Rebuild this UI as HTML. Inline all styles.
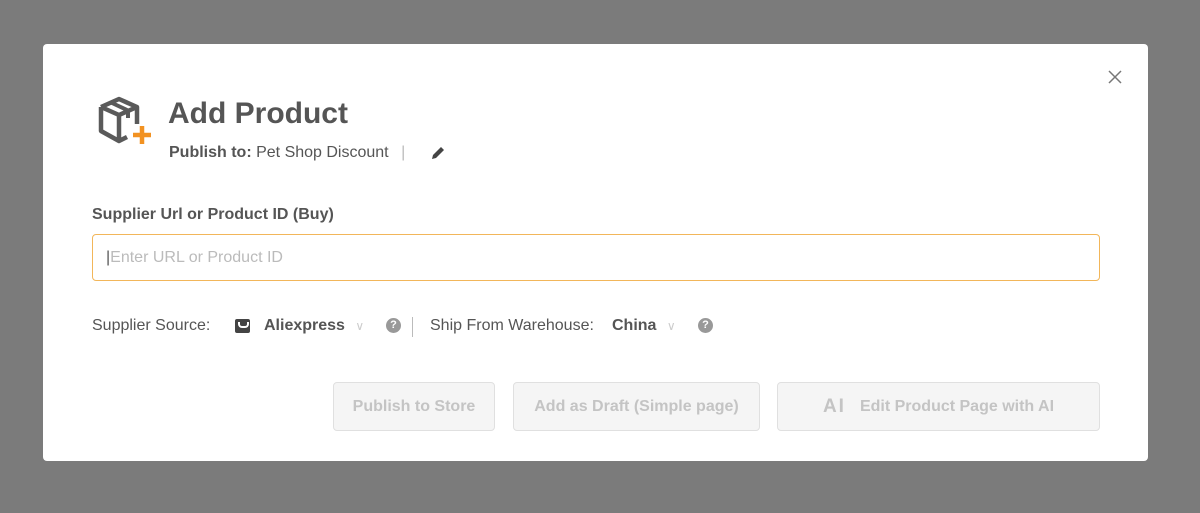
<!DOCTYPE html>
<html><head><style>
body{margin:0;width:1200px;height:513px;background:#7b7b7b;font-family:"Liberation Sans",sans-serif;position:relative;overflow:hidden}
.m{position:absolute;left:43px;top:44px;width:1105px;height:417px;background:#fff;border-radius:4px}
.a{position:absolute;color:#555}
.btn{position:absolute;top:338px;height:49px;border:1px solid #e0e0e0;background:#f5f5f5;border-radius:4px;color:#c4c4c4;font-weight:bold;font-size:16px;display:flex;align-items:center;justify-content:center;box-sizing:border-box}
</style></head><body>
<div class="m">
<svg class="a" style="left:1065px;top:26px" width="14" height="14" viewBox="0 0 14 14"><path d="M1 1L13 13M13 1L1 13" stroke="#777" stroke-width="1.5"/></svg>
<svg class="a" style="left:54px;top:52px" width="56" height="50" viewBox="0 0 56 50">
<path d="M4 11L22 3L40 11V28M4 11V35L22 45L30 41M4 11L22 19V45M22 19L40 11" fill="none" stroke="#5a5a5a" stroke-width="4.5" stroke-linejoin="round"/>
<path d="M14 6.5L31 14.5V22" fill="none" stroke="#5a5a5a" stroke-width="4"/>
<path d="M45 30V48M36 39H54" stroke="#f29222" stroke-width="4.5"/></svg>
<div class="a" style="left:125px;top:53px;font-size:30px;font-weight:bold;color:#555">Add Product</div>
<div class="a" style="left:126px;top:100px;font-size:16px;color:#555"><b>Publish to:</b> Pet Shop Discount <span style="color:#bbb;margin-left:8px">|</span></div>
<svg class="a" style="left:387px;top:101px" width="16" height="16" viewBox="0 0 16 16"><path d="M2 14L3 10L11 2L14 5L6 13Z" fill="#444"/></svg>
<div class="a" style="left:49px;top:162px;font-size:16px;font-weight:bold;color:#555">Supplier Url or Product ID (Buy)</div>
<div class="a" style="left:49px;top:190px;width:1008px;height:47px;border:1px solid #f2b65a;border-radius:4px;box-sizing:border-box"></div>
<div class="a" style="left:63px;top:205px;font-size:16px;color:#bbb"><span style="color:#555">|</span>Enter URL or Product ID</div>
<div class="a" style="left:49px;top:273px;font-size:16px;color:#555">Supplier Source:</div>
<div class="a" style="left:192px;top:275px;width:15px;height:14px;background:#444;border-radius:2px"><div style="position:absolute;left:3px;top:3px;width:7px;height:4px;border-bottom:2px solid #fff;border-left:2px solid #fff;border-right:2px solid #fff;border-radius:0 0 4px 4px"></div></div>
<div class="a" style="left:221px;top:273px;font-size:16px;font-weight:bold;color:#555">Aliexpress <span style="color:#ccc;font-weight:normal;font-size:12px;margin-left:6px">∨</span></div>
<div class="a" style="left:343px;top:274px;width:15px;height:15px;border-radius:50%;background:#999;color:#fff;font-size:11px;font-weight:bold;text-align:center;line-height:15px">?</div>
<div class="a" style="left:369px;top:273px;width:1px;height:20px;background:#bbb"></div>
<div class="a" style="left:387px;top:273px;font-size:16px;color:#555">Ship From Warehouse:</div>
<div class="a" style="left:569px;top:273px;font-size:16px;font-weight:bold;color:#555">China <span style="color:#ccc;font-weight:normal;font-size:12px;margin-left:6px">∨</span></div>
<div class="a" style="left:655px;top:274px;width:15px;height:15px;border-radius:50%;background:#999;color:#fff;font-size:11px;font-weight:bold;text-align:center;line-height:15px">?</div>
<div class="btn" style="left:290px;width:162px">Publish to Store</div>
<div class="btn" style="left:470px;width:247px">Add as Draft (Simple page)</div>
<div class="btn" style="left:734px;width:323px"><span style="font-size:19px;margin-right:14px;letter-spacing:2px">AI</span>Edit Product Page with AI</div>
</div>
</body></html>
